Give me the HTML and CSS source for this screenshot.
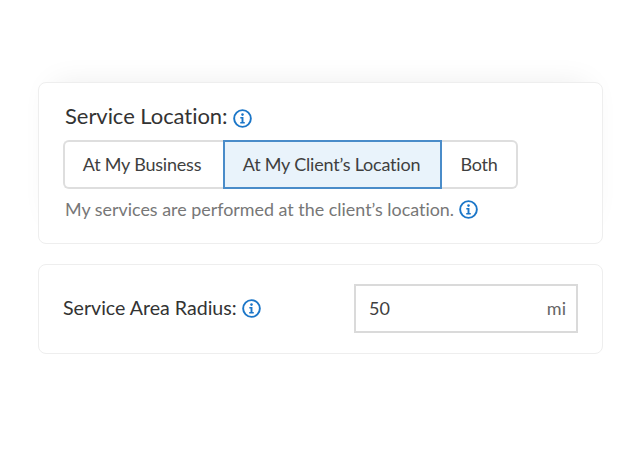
FILE: index.html
```html
<!DOCTYPE html>
<html lang="en">
<head>
<meta charset="utf-8">
<title>Service Location</title>
<link rel="stylesheet" href="styles.css">
</head>
<body>
<svg class="defs" width="0" height="0" aria-hidden="true">
  <symbol id="info" viewBox="0 0 20 20">
    <circle cx="10" cy="10" r="8.8" fill="none" stroke="currentColor" stroke-width="2"/>
    <circle cx="10" cy="5.9" r="1.35" fill="currentColor"/>
    <path d="M7.7 8.4h3.3v5.2h1.4v1.6H7.6v-1.6h1.4v-3.6H7.7z" fill="currentColor"/>
  </symbol>
</svg>
<main class="page">
  <section class="card card-location">
    <h2 class="title">Service Location:<svg class="info info-title"><use href="#info"/></svg></h2>
    <div class="segments">
      <div class="segment segment-first">At My Business</div>
      <div class="segment segment-active">At My Client’s Location</div>
      <div class="segment segment-last">Both</div>
    </div>
    <p class="hint">My services are performed at the client’s location.<svg class="info"><use href="#info"/></svg></p>
  </section>
  <section class="card card-radius">
    <div class="radius-label">Service Area Radius:<svg class="info"><use href="#info"/></svg></div>
    <div class="field"><span class="field-value">50</span><span class="field-unit">mi</span></div>
  </section>
</main>
</body>
</html>
```
FILE: styles.css
```css
* { box-sizing: border-box; }
html, body { margin: 0; height: 100%; background: #fff; }
body {
  font-family: "Lato", "Liberation Sans", sans-serif;
  font-variant-ligatures: none;
  color: #333;
  overflow: hidden;
}
.defs { position: absolute; }
.page {
  display: flex;
  flex-direction: column;
  gap: 20px;
  padding: 82px 37px 0 38px;
}
.card {
  background: #fff;
  border: 1px solid #eeeeee;
  border-radius: 8px;
}
.card-location {
  height: 162px;
  padding: 19px 26px 0 24px;
  box-shadow: 0 -12px 30px -16px rgba(0, 0, 0, 0.09);
}
.card-radius {
  height: 90px;
  padding: 19px 24px 0 24px;
  display: flex;
  justify-content: space-between;
  align-items: flex-start;
}
.title {
  margin: 0 0 10px 2px;
  font-size: 22px;
  line-height: 28px;
  font-weight: 400;
  letter-spacing: -0.05px;
  color: #333;
  display: flex;
  align-items: center;
  gap: 5px;
  white-space: pre;
}
.info { width: 19px; height: 19px; color: #1b76c8; flex: none; }
.info-title { margin-top: 4px; }
.segments { display: flex; height: 49px; }
.segment {
  display: flex;
  align-items: center;
  justify-content: center;
  font-size: 18px;
  letter-spacing: -0.2px;
  border: 2px solid #dedede;
  color: #3f3f3f;
  padding-bottom: 1px;
}
.segment-first {
  width: 160px;
  border-right: 0;
  border-radius: 6px 0 0 6px;
  padding-right: 4px;
}
.segment-active {
  width: 219px;
  background: #e9f3fb;
  border: 2px solid #4a8cc9;
  padding-right: 2px;
}
.segment-last {
  width: 76px;
  border-left: 0;
  border-radius: 0 6px 6px 0;
}
.hint {
  margin: 9px 0 0 2px;
  font-size: 17.9px;
  line-height: 22px;
  color: #777;
  display: flex;
  align-items: center;
  gap: 5px;
  white-space: pre;
}
.radius-label {
  margin-top: 12px;
  font-size: 19.6px;
  line-height: 24px;
  color: #333;
  display: flex;
  align-items: center;
  gap: 5px;
  white-space: pre;
}
.field {
  width: 224px;
  height: 49px;
  border: 2px solid #dadada;
  display: flex;
  align-items: center;
  justify-content: space-between;
  padding: 0 10px 2px 13px;
  font-size: 18px;
}
.field-value { color: #3f3f3f; }
.field-unit { color: #666; }
```
